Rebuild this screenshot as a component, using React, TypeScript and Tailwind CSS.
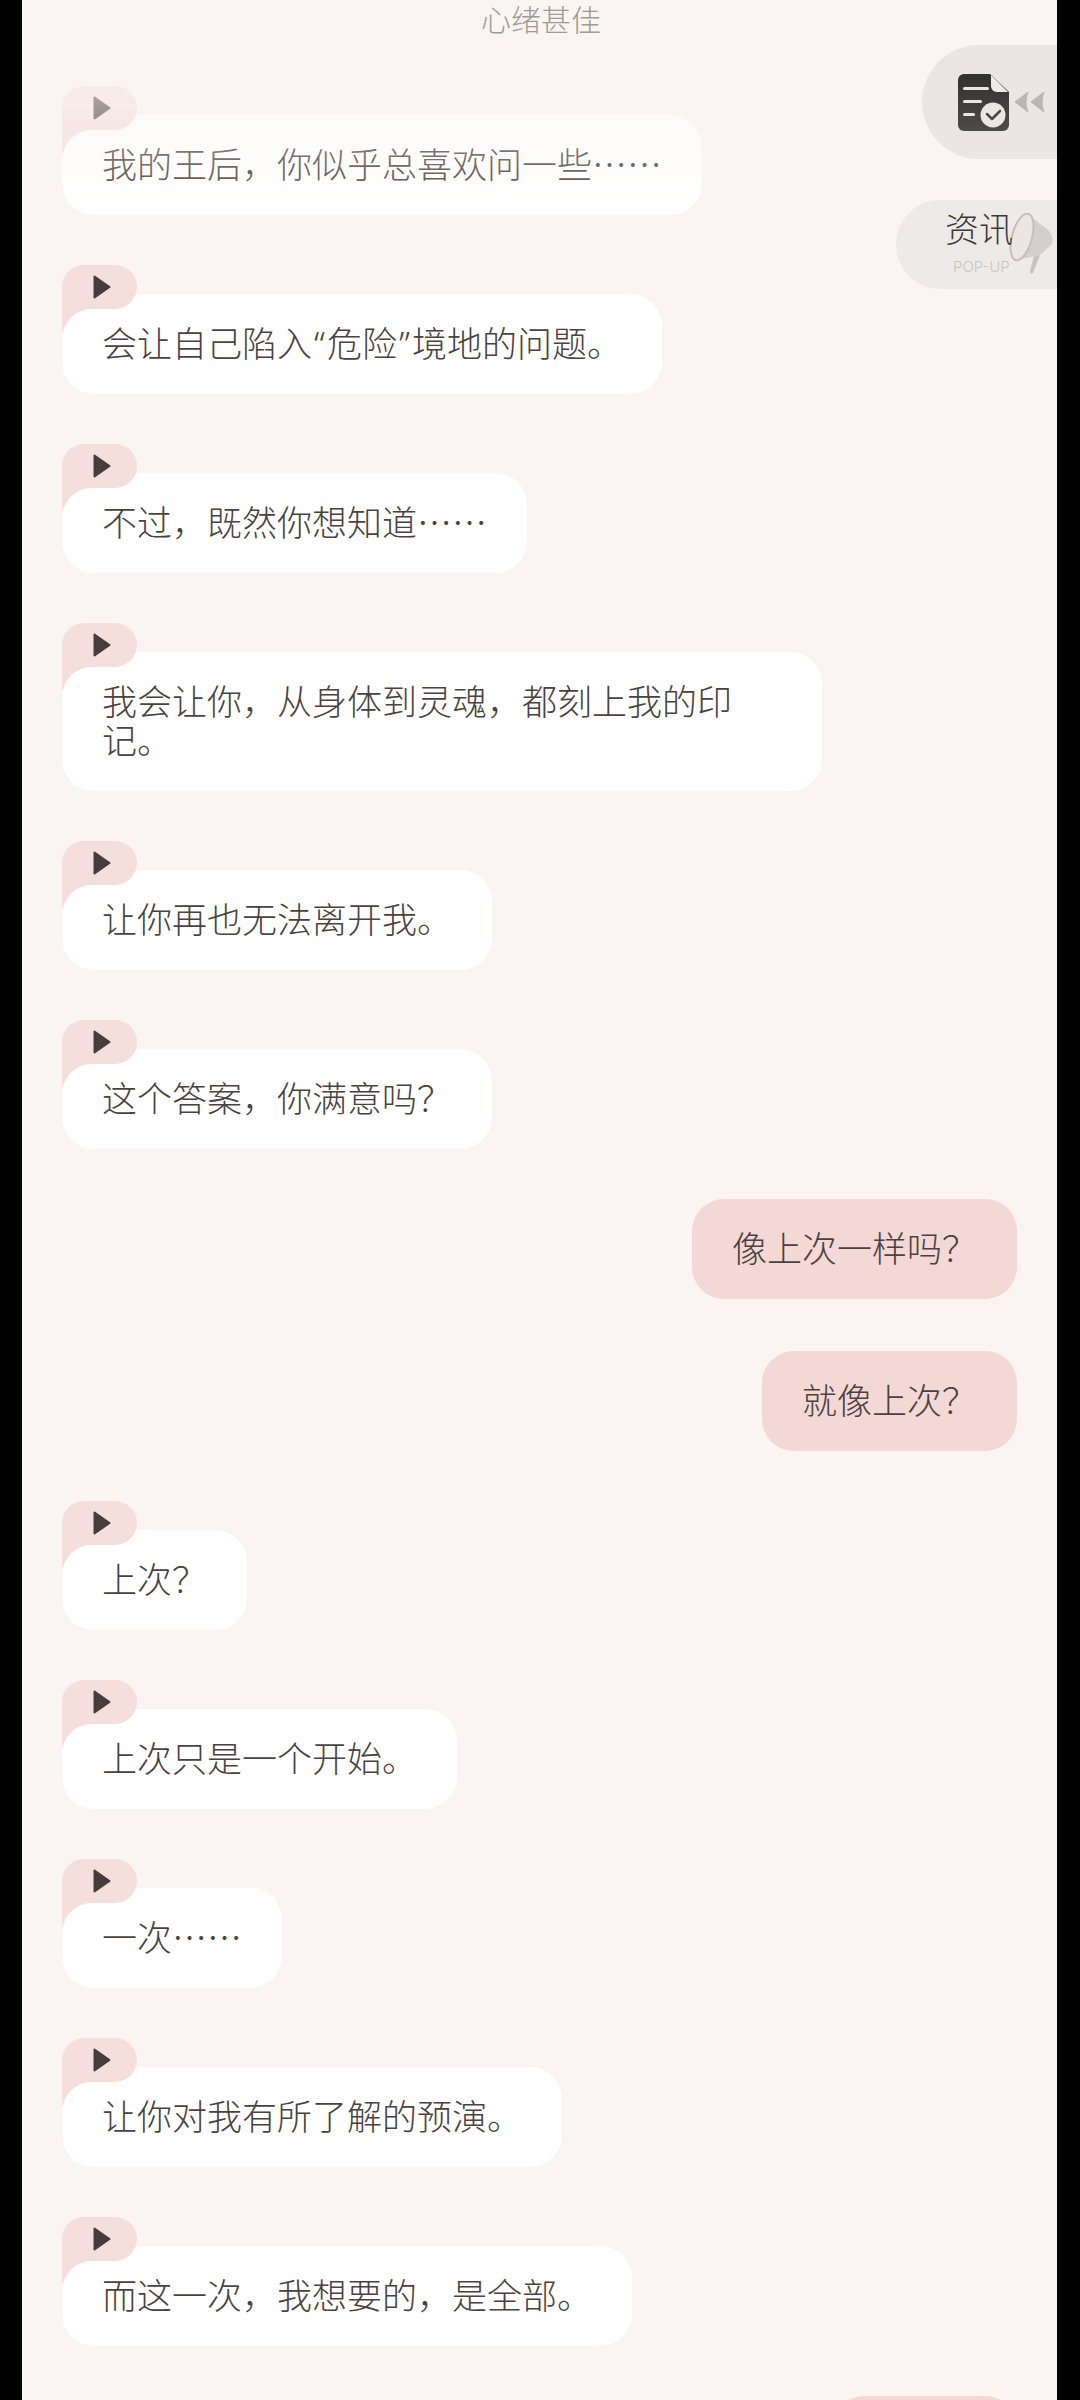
import * as React from "react";

type Msg = { side: "left" | "right"; text: React.ReactNode; extraGap?: boolean };

function Quote({ children }: { children: string }) {
  return <span className="mx-[2px] font-['Noto_Sans'] leading-[0]">{children}</span>;
}

const messages: Msg[] = [
  { side: "left", text: "我的王后，你似乎总喜欢问一些……" },
  {
    side: "left",
    text: (
      <>
        会让自己陷入<Quote>“</Quote>危险<Quote>”</Quote>境地的问题。
      </>
    ),
  },
  { side: "left", text: "不过，既然你想知道……" },
  { side: "left", text: "我会让你，从身体到灵魂，都刻上我的印记。" },
  { side: "left", text: "让你再也无法离开我。" },
  { side: "left", text: "这个答案，你满意吗？" },
  { side: "right", text: "像上次一样吗？" },
  { side: "right", text: "就像上次？", extraGap: true },
  { side: "left", text: "上次？" },
  { side: "left", text: "上次只是一个开始。" },
  { side: "left", text: "一次……" },
  { side: "left", text: "让你对我有所了解的预演。" },
  { side: "left", text: "而这一次，我想要的，是全部。" },
];

function PlayTag() {
  return (
    <>
      <div className="absolute left-0 top-0 z-10 flex h-[44px] w-[75px] items-center rounded-t-[24px] rounded-br-[24px] bg-[#f5dfdc] pl-[31px]">
        <svg width="18" height="24" viewBox="0 0 18 24">
          <path d="M1.5 1.5 L16.5 12 L1.5 22.5 Z" fill="#463d3c" stroke="#463d3c" strokeWidth="2" strokeLinejoin="round" />
        </svg>
      </div>
      <div className="absolute left-0 top-[44px] z-10 h-[24px] w-[32px] bg-[#f5dfdc]">
        <div className="h-[32px] w-[32px] rounded-tl-[30px] bg-white" />
      </div>
    </>
  );
}

function LeftBubble({ text }: { text: React.ReactNode }) {
  return (
    <div className="relative w-fit pt-[29px]">
      <PlayTag />
      <div className="w-fit max-w-[760px] rounded-[32px] bg-white px-[40px] pb-[33px] pt-[28px] text-[35px] font-light leading-[39px] text-[#4a4240]">
        {text}
      </div>
    </div>
  );
}

function RightBubble({ text, extraGap }: { text: React.ReactNode; extraGap?: boolean }) {
  return (
    <div
      className={
        extraGap
          ? "mt-[2px] w-fit self-end rounded-[32px] bg-[#f3d8d5] px-[40px] pb-[33px] pt-[28px] text-[35px] font-light leading-[39px] text-[#4a4240]"
          : "w-fit self-end rounded-[32px] bg-[#f3d8d5] px-[40px] pb-[33px] pt-[28px] text-[35px] font-light leading-[39px] text-[#4a4240]"
      }
    >
      {text}
    </div>
  );
}

function DocIcon() {
  return (
    <svg width="51" height="57" viewBox="0 0 51 57">
      <defs>
        <linearGradient id="doc" x1="0" y1="0" x2="0" y2="1">
          <stop offset="0" stopColor="#333030" />
          <stop offset="1" stopColor="#4d4a49" />
        </linearGradient>
      </defs>
      <path d="M6 0 H32 L51 18 V51 a6 6 0 0 1 -6 6 H6 a6 6 0 0 1 -6 -6 V6 a6 6 0 0 1 6 -6 Z" fill="url(#doc)" />
      <path d="M33 1 L50 18 H39 a6 6 0 0 1 -6 -6 Z" fill="#efebe8" />
      <rect x="5" y="13" width="26" height="3" rx="1.5" fill="#ebe6e3" />
      <rect x="5" y="26" width="19" height="3" rx="1.5" fill="#ebe6e3" />
      <rect x="5" y="39" width="12" height="3" rx="1.5" fill="#ebe6e3" />
      <circle cx="35" cy="41" r="12.5" fill="#ebe6e3" />
      <path d="M29 40 L34 45 L42 37" fill="none" stroke="#4a4746" strokeWidth="2.5" strokeLinecap="round" strokeLinejoin="round" />
    </svg>
  );
}

function Chevrons() {
  return (
    <svg width="31" height="22" viewBox="0 0 31 22">
      <path d="M14 1 L1 11 L14 21 Q10 11 14 1 Z" fill="#bcb7b3" stroke="#bcb7b3" strokeLinejoin="round" />
      <path d="M30 1 L17 11 L30 21 Q26 11 30 1 Z" fill="#bcb7b3" stroke="#bcb7b3" strokeLinejoin="round" />
    </svg>
  );
}

function Megaphone() {
  return (
    <svg width="47" height="62" viewBox="0 0 47 62">
      <path d="M22 2 L42 18 Q47 24 45 31 L33 42 L14 46 Z" fill="#d4cfcb" />
      <path d="M27 43 L33 42 L26 60 Q23 62 23 58 Z" fill="#c8c3bf" />
      <ellipse cx="15" cy="24" rx="10" ry="24" transform="rotate(15 15 24)" fill="#ebe6e3" stroke="#c4bfbb" strokeWidth="2" />
    </svg>
  );
}

export default function App() {
  return (
    <div className="flex h-[2400px] w-[1080px] overflow-hidden bg-black font-['Noto_Sans_CJK_SC','Noto_Sans',sans-serif]" lang="zh-CN">
      <div className="relative ml-[22px] h-full w-[1035px] overflow-hidden bg-[#faf5f2]">
        <div className="relative z-30 h-[86px] pl-[3px] text-center text-[30px] font-light leading-[36px] text-[#a09b98]">心绪甚佳</div>

        <div className="flex flex-col gap-[50px] px-[40px]">
          {messages.map((m, i) =>
            m.side === "left" ? (
              <LeftBubble key={i} text={m.text} />
            ) : (
              <RightBubble key={i} text={m.text} extraGap={m.extraGap} />
            )
          )}
          <div className="h-[100px] w-[185px] self-end rounded-[32px] bg-[#f3d8d5]" />
        </div>

        {/* fade at the top of the list */}
        <div className="pointer-events-none absolute left-0 right-0 top-0 z-20 h-[214px] bg-gradient-to-b from-[#faf5f2] to-[#faf5f2]/0" />

        <div className="absolute right-0 top-[45px] z-30 flex h-[114px] w-[135px] items-center rounded-l-[57px] bg-[#ebe6e3] pl-[36px]">
          <DocIcon />
          <div className="ml-[5px]">
            <Chevrons />
          </div>
        </div>

        <div className="absolute right-0 top-[200px] z-30 h-[89px] w-[161px] rounded-l-[44px] bg-[#eeeae7]">
          <div className="absolute left-[111px] top-[13px]">
            <Megaphone />
          </div>
          <div className="relative pl-[49px] pt-[6px] text-[34px] font-light leading-[44px] text-[#3f3a39]">资讯</div>
          <div className="pl-[57px] pt-[9px] font-['Inter'] text-[15px] font-light leading-[16px] text-[#c9c5c2]">POP-UP</div>
        </div>
      </div>
    </div>
  );
}
